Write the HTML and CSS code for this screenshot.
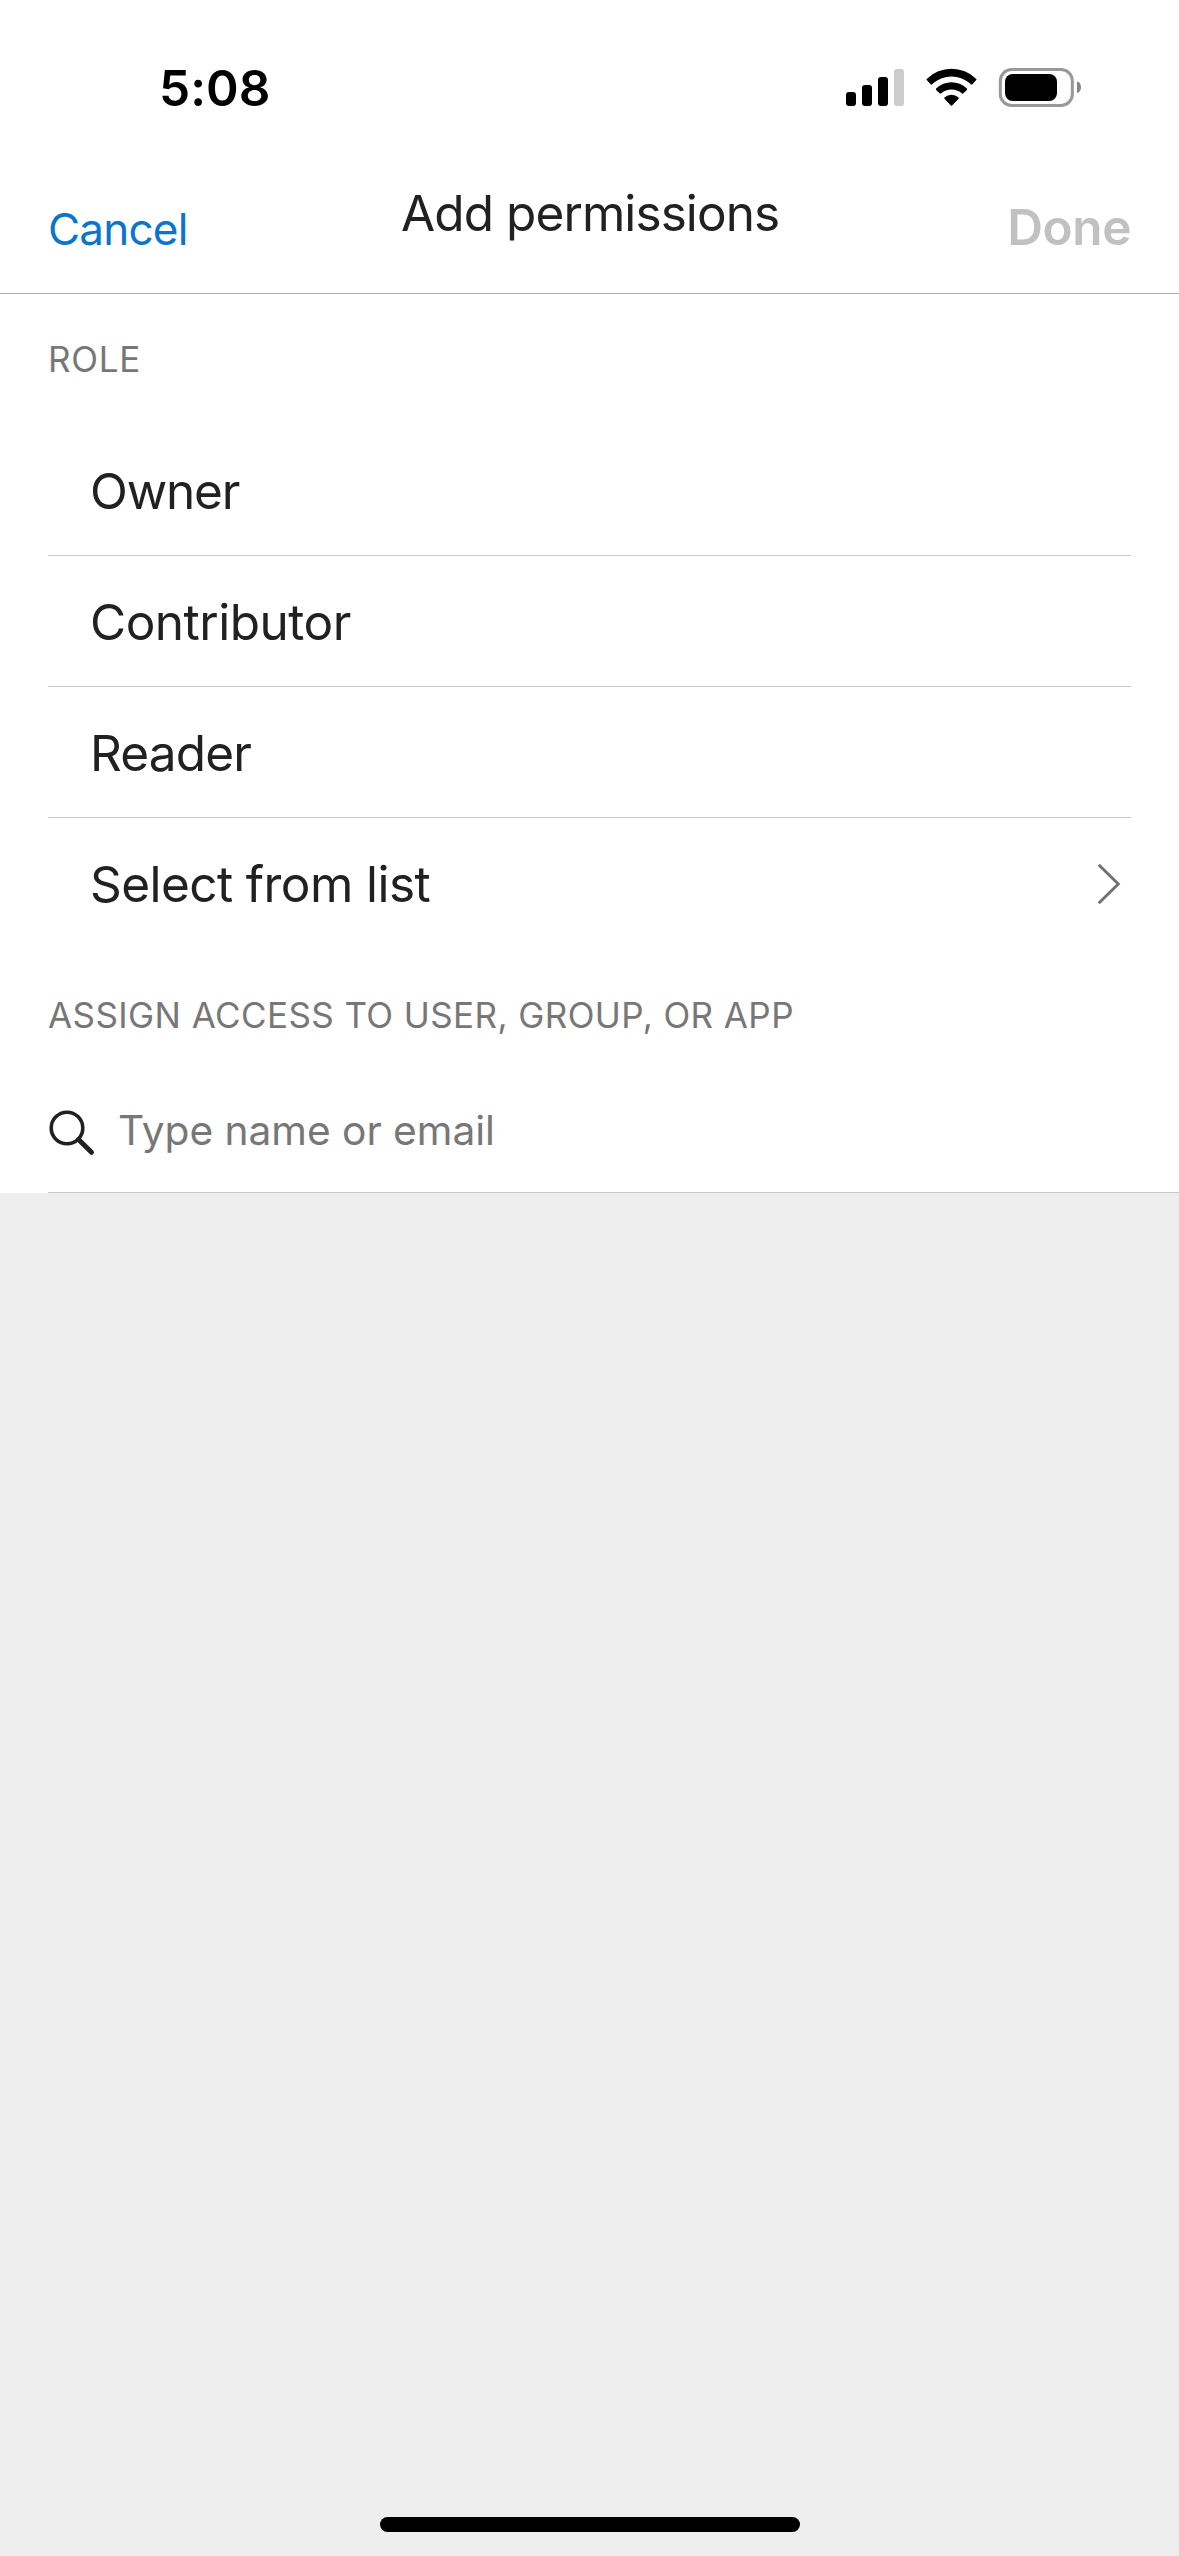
FILE: index.html
```html
<!DOCTYPE html>
<html lang="en">
<head>
<meta charset="utf-8">
<title>Add permissions</title>
<link rel="stylesheet" href="styles.css">
</head>
<body>
<div class="screen">
  <div class="status">
    <span class="time">5:08</span>
    <div class="indicators">
      <svg width="58" height="39" viewBox="48 54 174 117" aria-hidden="true">
        <rect x="48" y="126" width="30" height="42" rx="9"/>
        <rect x="96" y="105" width="30" height="63" rx="9"/>
        <rect x="144" y="81" width="30" height="87" rx="9"/>
        <rect x="192" y="57" width="30" height="111" rx="9" fill="#ccc"/>
      </svg>
      <svg width="51" height="39" viewBox="288 54 153 117" aria-hidden="true">
        <path d="M291 86A106 106 0 0 1 438 86Q441 89 438 91L428 102Q425 105 422 102A84 84 0 0 0 307 102Q304 105 301 102L291 91Q288 89 291 86Z"/>
        <path d="M319 115A66 66 0 0 1 410 115Q413 118 410 121L400 130Q398 132 395 130A47 47 0 0 0 334 130Q331 132 329 130L319 121Q316 118 319 115Z"/>
        <path d="M344 142A31 31 0 0 1 385 142Q388 144 385 147L367 166Q364.500 169 362 166L344 147Q341 144 344 142Z"/>
      </svg>
      <svg width="84" height="39" viewBox="504 54 252 117" aria-hidden="true">
        <rect x="511" y="58.500" width="216" height="108" rx="34" fill="none" stroke="#999" stroke-width="9"/>
        <rect x="525" y="72" width="156" height="81" rx="23"/>
        <path d="M741 94Q753 99 753 112T741 130Z" fill="#888"/>
      </svg>
    </div>
  </div>

  <header class="nav">
    <a class="cancel">Cancel</a>
    <h1 class="title">Add permissions</h1>
    <span class="done">Done</span>
  </header>

  <main class="form">
    <h2 class="label label-role">ROLE</h2>
    <ul class="roles">
      <li class="role owner">Owner</li>
      <li class="role contributor">Contributor</li>
      <li class="role reader">Reader</li>
      <li class="role select">
        <span>Select from list</span>
        <svg width="24" height="44" viewBox="0 0 24 44" aria-hidden="true"><path d="M1.700 2.700 21.300 22 1.700 41.300" fill="none" stroke="#707070" stroke-width="2.900"/></svg>
      </li>
    </ul>
    <h2 class="label label-access">ASSIGN ACCESS TO USER, GROUP, OR APP</h2>
    <div class="search">
      <svg class="glass" width="48" height="48" viewBox="0 0 48 48" aria-hidden="true"><g fill="none" stroke="#212121"><circle cx="19" cy="20" r="15.800" stroke-width="3.600"/><path d="M30.500 31.500 43.500 44.300" stroke-width="5" stroke-linecap="round"/></g></svg>
      <span class="hint">Type name or email</span>
    </div>
  </main>
  <div class="home"></div>
</div>
</body>
</html>
```
FILE: styles.css
```css
* { box-sizing: border-box; }
body { margin: 0; font-family: Inter, "Liberation Sans", sans-serif; color: #212121; }
h1, h2, ul { margin: 0; padding: 0; font-weight: 400; list-style: none; }
svg { display: block; flex: none; }

.screen { width: 1179px; height: 2556px; display: flex; flex-direction: column; background: #eee; }

.status { height: 177px; flex: none; display: flex; justify-content: space-between; padding: 58px 97px 0 159px; background: #fff; }
.time { font-size: 49.5px; font-weight: 600; line-height: 60px; letter-spacing: 0.1px; color: #000; }
.indicators { display: flex; margin-top: 10px; gap: 21.5px; height: 39px; }

.nav { height: 117px; flex: none; display: grid; grid-template-columns: 353px 1fr auto; padding: 0 48px; background: #fff; border-bottom: 1px solid #b2b2b2; line-height: 60px; }
.cancel { padding-top: 22px; font-size: 44px; letter-spacing: -0.78px; color: #0a75ca; }
.title { padding-top: 6px; font-size: 49.5px; letter-spacing: -0.91px; }
.done { padding-top: 20px; font-size: 49.5px; font-weight: 600; letter-spacing: -0.4px; color: #c1c1c1; }

.form { flex: none; background: #fff; }
.label { height: 131px; padding-left: 48px; line-height: 131px; font-size: 35px; color: #777; }
.label-role { letter-spacing: 0.74px; }
.label-access { padding-top: 1px; letter-spacing: 0.41px; }

.roles { margin: 0 48px; }
.role { height: 131px; display: flex; align-items: center; justify-content: space-between; padding: 2px 10px 0 42px; border-bottom: 1px solid #c8c8c8; font-size: 49.5px; line-height: 60px; }
.owner { letter-spacing: -1.2px; }
.contributor { letter-spacing: -0.5px; }
.reader { letter-spacing: -0.85px; }
.select { border-bottom-color: transparent; letter-spacing: -0.57px; }

.search { height: 113px; display: flex; align-items: flex-start; margin-left: 48px; padding-top: 28px; border-bottom: 1px solid #c8c8c8; }
.hint { margin-left: 22px; line-height: 45px; font-size: 40.7px; letter-spacing: -0.03px; color: #777; }

.home { width: 420px; height: 15px; margin: auto 0 24px 380px; border-radius: 8px; background: #000; }
```
